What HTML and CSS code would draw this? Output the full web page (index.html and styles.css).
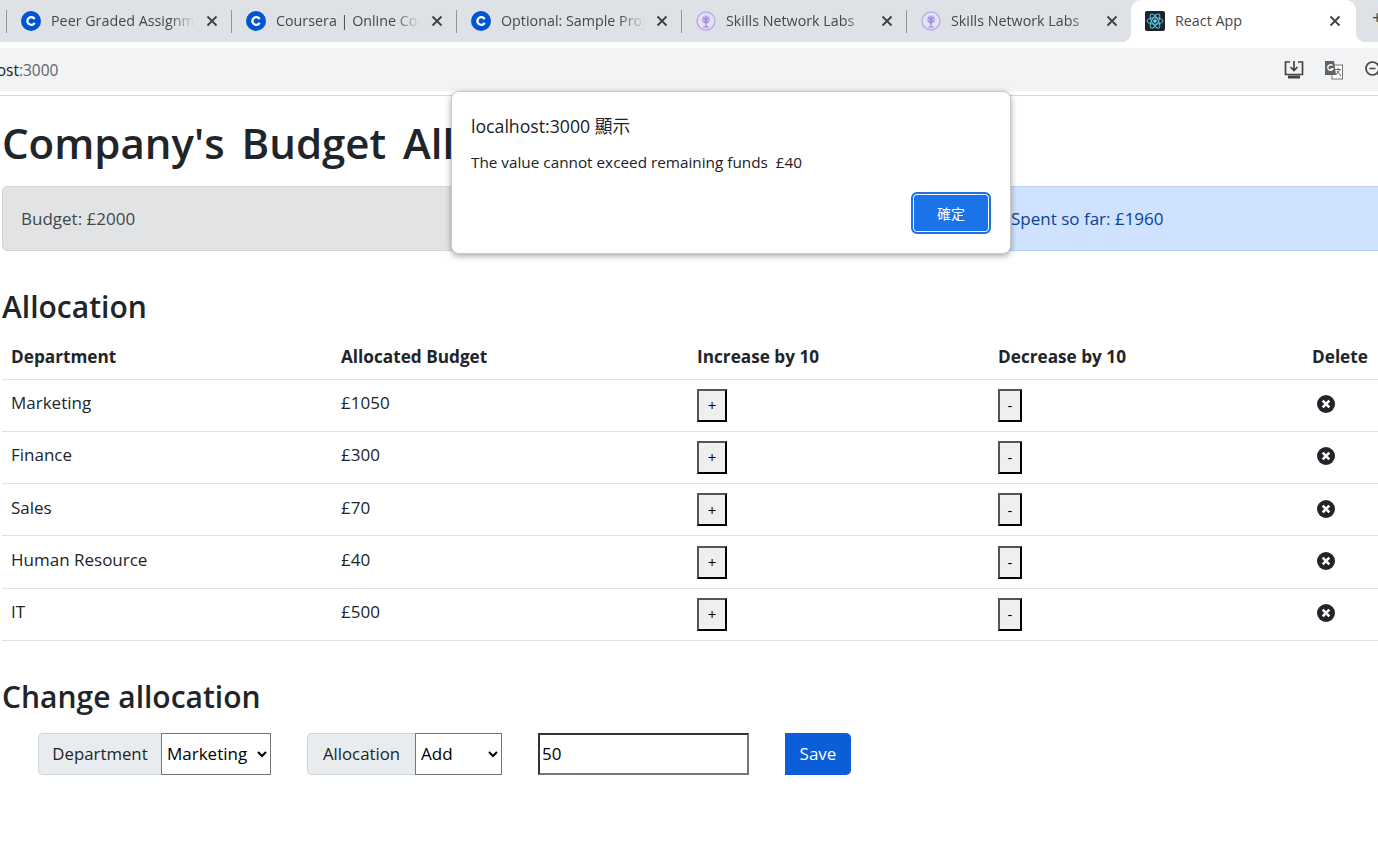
FILE: index.html
```html
<!DOCTYPE html>
<html lang="en">
<head>
  <meta charset="UTF-8">
  <meta name="viewport" content="width=device-width, initial-scale=1">
  <title>React App</title>
  <link rel="stylesheet" href="styles.css">
</head>
<body>
<svg class="sprites" width="0" height="0">
  <symbol id="coursera" viewBox="0 0 20 20">
    <circle cx="10" cy="10" r="10" fill="#0056d2"/>
    <path d="M14.600 7.600A5 5 0 1 0 14.600 12.400L12.600 11.200A2.700 2.700 0 1 1 12.600 8.800Z" fill="#fff"/>
  </symbol>
  <symbol id="skills" viewBox="0 0 20 20">
    <circle cx="10" cy="10" r="9" fill="#e6e1f5" stroke="#b9aaec" stroke-width="1.400"/>
    <circle cx="10" cy="8.500" r="4.300" fill="#c9bdee"/>
    <path d="M10 5V16M10 9L7 6.500M10 9L13 6.500M10 12L7 9.500M10 12L13 9.500M7.500 16H12.500" fill="none" stroke="#8f7ed6" stroke-width="1"/>
  </symbol>
  <symbol id="close" viewBox="0 0 12 12">
    <path d="M1.500 1.500L10.500 10.500M10.500 1.500L1.500 10.500" fill="none" stroke="#3c4043" stroke-width="1.800"/>
  </symbol>
  <symbol id="delete" viewBox="0 0 18 18">
    <circle cx="9" cy="9" r="9" fill="#212529"/>
    <path d="M5.700 5.700L12.300 12.300M12.300 5.700L5.700 12.300" fill="none" stroke="#fff" stroke-width="2.600"/>
  </symbol>
</svg>

<div class="tabstrip">
  <div class="tab">
    <svg class="favicon"><use href="#coursera"/></svg>
    <span class="tab-title">Peer Graded Assignment</span>
    <svg class="tab-close"><use href="#close"/></svg>
  </div>
  <div class="tab">
    <svg class="favicon"><use href="#coursera"/></svg>
    <span class="tab-title">Coursera | Online Courses</span>
    <svg class="tab-close"><use href="#close"/></svg>
  </div>
  <div class="tab">
    <svg class="favicon"><use href="#coursera"/></svg>
    <span class="tab-title">Optional: Sample Project</span>
    <svg class="tab-close"><use href="#close"/></svg>
  </div>
  <div class="tab">
    <svg class="favicon"><use href="#skills"/></svg>
    <span class="tab-title">Skills Network Labs</span>
    <svg class="tab-close"><use href="#close"/></svg>
  </div>
  <div class="tab tab-last">
    <svg class="favicon"><use href="#skills"/></svg>
    <span class="tab-title">Skills Network Labs</span>
    <svg class="tab-close"><use href="#close"/></svg>
  </div>
  <div class="tab tab-active">
    <svg class="favicon" viewBox="0 0 20 20">
      <rect width="20" height="20" rx="2" fill="#20232a"/>
      <circle cx="10" cy="10" r="1.800" fill="#61dafb"/>
      <g fill="none" stroke="#61dafb" stroke-width="0.900">
        <ellipse cx="10" cy="10" rx="8" ry="3.200"/>
        <ellipse cx="10" cy="10" rx="8" ry="3.200" transform="rotate(60 10 10)"/>
        <ellipse cx="10" cy="10" rx="8" ry="3.200" transform="rotate(120 10 10)"/>
      </g>
    </svg>
    <span class="tab-title">React App</span>
    <svg class="tab-close"><use href="#close"/></svg>
  </div>
  <span class="new-tab">+</span>
</div>

<div class="toolbar">
  <div class="address">localhost<span class="address-port">:3000</span></div>
  <div class="toolbar-icons">
    <svg class="tool-icon" viewBox="0 0 20 20">
      <path d="M6 2H1.500V14.500H18.500V2H14M10 1V10.500M6.500 7L10 10.500L13.500 7" fill="none" stroke="#444" stroke-width="1.700"/>
      <rect x="4" y="15.500" width="12" height="3" fill="#444"/>
    </svg>
    <svg class="tool-icon" viewBox="0 0 20 20">
      <rect x="8" y="5" width="10.500" height="14" fill="#fff" stroke="#777" stroke-width="1"/>
      <path d="M11 9.500H17M14 8V9.500M12 15L16 9.500M13 11L17 16" fill="none" stroke="#666" stroke-width="1"/>
      <path d="M1 1H10L12 15H1Z" fill="#5f6368"/>
      <path d="M8.500 5.500A2.800 2.800 0 1 0 9 9H6.500" fill="none" stroke="#fff" stroke-width="1.400"/>
    </svg>
    <svg class="tool-icon" viewBox="0 0 20 20">
      <circle cx="8.500" cy="8.500" r="6.500" fill="none" stroke="#444" stroke-width="1.700"/>
      <path d="M5.500 8.500H11.500M13.500 13.500L18 18" fill="none" stroke="#444" stroke-width="1.700"/>
    </svg>
  </div>
</div>

<div class="page">
  <h1 class="page-title">Company's Budget Allocation</h1>

  <div class="summary">
    <div class="alert alert-secondary">Budget: £2000</div>
    <div class="alert alert-success">Remaining: £40</div>
    <div class="alert alert-primary">Spent so far: £1960</div>
  </div>

  <h3 class="section-title">Allocation</h3>
  <table class="budget-table">
    <colgroup>
      <col class="col-dept">
      <col class="col-budget">
      <col class="col-inc">
      <col class="col-dec">
      <col class="col-del">
    </colgroup>
    <thead>
      <tr>
        <th>Department</th>
        <th>Allocated Budget</th>
        <th>Increase by 10</th>
        <th>Decrease by 10</th>
        <th>Delete</th>
      </tr>
    </thead>
    <tbody>
      <tr>
        <td>Marketing</td>
        <td>£1050</td>
        <td><button class="step-btn plus">+</button></td>
        <td><button class="step-btn minus">-</button></td>
        <td><svg class="delete-icon"><use href="#delete"/></svg></td>
      </tr>
      <tr>
        <td>Finance</td>
        <td>£300</td>
        <td><button class="step-btn plus">+</button></td>
        <td><button class="step-btn minus">-</button></td>
        <td><svg class="delete-icon"><use href="#delete"/></svg></td>
      </tr>
      <tr>
        <td>Sales</td>
        <td>£70</td>
        <td><button class="step-btn plus">+</button></td>
        <td><button class="step-btn minus">-</button></td>
        <td><svg class="delete-icon"><use href="#delete"/></svg></td>
      </tr>
      <tr>
        <td>Human Resource</td>
        <td>£40</td>
        <td><button class="step-btn plus">+</button></td>
        <td><button class="step-btn minus">-</button></td>
        <td><svg class="delete-icon"><use href="#delete"/></svg></td>
      </tr>
      <tr>
        <td>IT</td>
        <td>£500</td>
        <td><button class="step-btn plus">+</button></td>
        <td><button class="step-btn minus">-</button></td>
        <td><svg class="delete-icon"><use href="#delete"/></svg></td>
      </tr>
    </tbody>
  </table>

  <h3 class="section-title">Change allocation</h3>
  <form class="change-form" onsubmit="return false;">
    <div class="input-group">
      <label class="group-label label-dept">Department</label>
      <select class="group-select select-dept">
        <option>Marketing</option>
        <option>Finance</option>
        <option>Sales</option>
        <option>Human Resource</option>
        <option>IT</option>
      </select>
    </div>
    <div class="input-group">
      <label class="group-label label-alloc">Allocation</label>
      <select class="group-select select-alloc">
        <option>Add</option>
        <option>Reduce</option>
      </select>
    </div>
    <input class="amount" type="number" value="50">
    <button class="save-btn">Save</button>
  </form>
</div>

<div class="dialog">
  <div class="dialog-title">localhost:3000 顯示</div>
  <div class="dialog-message">The value cannot exceed remaining funds &nbsp;£40</div>
  <div class="dialog-actions">
    <button class="dialog-ok">確定</button>
  </div>
</div>

</body>
</html>
```

FILE: styles.css
```css
* {
  box-sizing: border-box;
}

html, body {
  height: 100%;
}

body {
  margin: 0;
  overflow: hidden;
  background: #fff;
  color: #212529;
  font-family: "Open Sans", "Noto Sans CJK TC", sans-serif;
}

.sprites {
  display: block;
  height: 0;
}

/* browser chrome */
.tabstrip {
  display: flex;
  align-items: stretch;
  height: 42px;
  padding-left: 6px;
  background: #dee1e6;
  white-space: nowrap;
}

.tab {
  display: flex;
  flex: 0 0 225px;
  align-items: center;
  position: relative;
  padding-left: 15px;
  font-size: 14.300px;
  color: #45484d;
}

/* short separator between the tabs */
.tab::before {
  content: "";
  position: absolute;
  left: 0;
  top: 10px;
  height: 23px;
  width: 1px;
  background: #8f9297;
}

.favicon {
  flex: none;
  width: 20px;
  height: 20px;
}

.tab-title {
  width: 144px;
  margin: 0 0 2px 10px;
  overflow: hidden;
  -webkit-mask-image: linear-gradient(to right, #000 82%, transparent);
  mask-image: linear-gradient(to right, #000 82%, transparent);
}

.tab-close {
  flex: none;
  width: 12px;
  height: 12px;
  margin-left: 11px;
}

.tab-active {
  padding-left: 14px;
  background: #fff;
  border-radius: 10px 10px 0 0;
}

.tab-active::before,
.tab-active::after {
  content: "";
  position: absolute;
  top: auto;
  bottom: 0;
  width: 10px;
  height: 10px;
  background: radial-gradient(circle at 0 0, #dee1e6 10px, #fff 10.500px);
}

.tab-active::before {
  left: -10px;
}

.tab-active::after {
  left: auto;
  right: -10px;
  background: radial-gradient(circle at 100% 0, #dee1e6 10px, #fff 10.500px);
}

.tab-active .tab-title {
  -webkit-mask-image: none;
  mask-image: none;
}

.tab-active .tab-close {
  margin-left: 10px;
}

.new-tab {
  margin: 5px 0 0 16px;
  font-size: 18px;
  color: #444;
}

.toolbar {
  display: flex;
  align-items: center;
  justify-content: space-between;
  height: 43px;
  margin-top: 6px;
  background: #f1f3f4;
  overflow: hidden;
}

.address {
  margin-left: -46px;
  font-size: 15.500px;
  color: #202124;
}

.address-port {
  color: #5f6368;
}

.toolbar-icons {
  display: flex;
  gap: 20px;
  margin-right: -6px;
}

.tool-icon {
  width: 20px;
  height: 20px;
}

/* page */
.page {
  width: 1500px;
  margin-top: 4px;
  padding: 0 0 0 2px;
  border-top: 1px solid #d8d8d8;
}

.page-title {
  margin: 22px 0 0;
  height: 50px;
  font-size: 42px;
  line-height: 50px;
  font-weight: 600;
  word-spacing: 6px;
  white-space: nowrap;
}

.summary {
  display: grid;
  grid-template-columns: repeat(3, 475px);
  gap: 20px;
  margin-top: 18px;
}

.alert {
  height: 65px;
  padding: 0 18px;
  border: 1px solid transparent;
  border-radius: 5px;
  font-size: 17px;
  line-height: 63px;
}

.alert-secondary {
  background: #e2e3e5;
  border-color: #d3d6d8;
  color: #41464b;
}

.alert-success {
  background: #d1e7dd;
  border-color: #badbcc;
  color: #0f5132;
}

.alert-primary {
  background: #cfe2ff;
  border-color: #b6d4fe;
  color: #084298;
}

.section-title {
  margin: 36px 0 0;
  height: 40px;
  font-size: 30px;
  line-height: 40px;
  font-weight: 600;
}

.budget-table {
  table-layout: fixed;
  width: 1400px;
  margin-top: 13px;
  border-collapse: collapse;
  font-size: 17px;
}

.col-dept {
  width: 330px;
}

.col-budget {
  width: 356px;
}

.col-inc {
  width: 301px;
}

.col-dec {
  width: 314px;
}

.budget-table th {
  height: 39px;
  padding: 0 9px 6px;
  text-align: left;
  font-size: 17.200px;
  font-weight: 700;
  border-bottom: 1px solid #dee2e6;
}

.budget-table td {
  height: 52.300px;
  padding: 0 9px 5px;
  border-bottom: 1px solid #dee2e6;
  vertical-align: middle;
}

.step-btn {
  display: block;
  height: 33px;
  margin-top: 5px;
  padding: 0;
  border-style: solid;
  border-width: 2px;
  border-color: #555 #000 #000 #555;
  background: #efefef;
  color: #000;
  font-family: inherit;
  font-size: 15px;
}

.plus {
  width: 30px;
}

.minus {
  width: 24px;
}

.delete-icon {
  display: block;
  width: 18px;
  height: 18px;
  margin: 3px 0 0 5px;
}

.change-form {
  display: flex;
  align-items: stretch;
  height: 42px;
  margin-top: 16px;
  margin-left: 36px;
}

.input-group {
  display: flex;
  margin-right: 36px;
}

.group-label {
  display: flex;
  align-items: center;
  justify-content: center;
  background: #e9ecef;
  border: 1px solid #ced4da;
  border-right: 0;
  border-radius: 5px 0 0 5px;
  font-size: 16.800px;
  color: #212529;
}

.label-dept {
  width: 123px;
}

.label-alloc {
  width: 108px;
}

.group-select {
  height: 42px;
  padding: 0 0 0 1px;
  border: 1px solid #767676;
  border-radius: 0;
  background: #fff;
  color: #000;
  font-family: inherit;
  font-size: 17px;
}

.select-dept {
  width: 110px;
}

.select-alloc {
  width: 87px;
}

.amount {
  width: 211px;
  height: 42px;
  padding: 0 2px;
  border-style: solid;
  border-width: 2px;
  border-color: #333 #767676 #767676 #333;
  color: #000;
  font-family: inherit;
  font-size: 17px;
  appearance: textfield;
}

.save-btn {
  width: 66px;
  height: 42px;
  margin-left: 36px;
  border: 0;
  border-radius: 0 5px 5px 0;
  background: #0b5ed7;
  color: #fff;
  font-family: inherit;
  font-size: 17px;
}

/* alert box on top of the page */
.dialog {
  position: absolute;
  left: 451px;
  top: 91px;
  width: 560px;
  height: 163px;
  padding: 23px 19px 0;
  background: #fff;
  border: 1px solid #c9c9c9;
  border-radius: 8px;
  box-shadow: 0 2px 6px rgba(0, 0, 0, 0.35);
  color: #202124;
}

.dialog-title {
  height: 22px;
  font-size: 17.700px;
  line-height: 22px;
}

.dialog-message {
  margin-top: 16px;
  font-size: 15.300px;
  line-height: 18px;
}

.dialog-actions {
  display: flex;
  justify-content: flex-end;
  margin-top: 21px;
}

.dialog-ok {
  width: 80px;
  height: 42px;
  border: 2px solid #1a73e8;
  border-radius: 6px;
  box-shadow: inset 0 0 0 1px #fff;
  background: #1a73e8;
  color: #fff;
  font-family: "Noto Sans CJK TC", sans-serif;
  font-size: 14px;
}
```
